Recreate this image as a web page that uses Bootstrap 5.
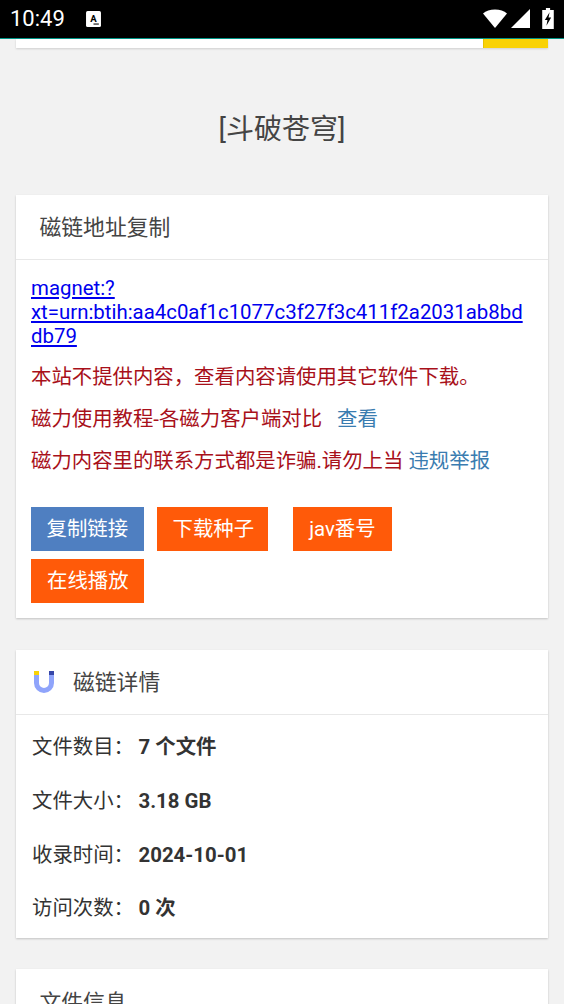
<!DOCTYPE html>
<html lang="zh"><head><meta charset="utf-8">
<link href="https://cdn.jsdelivr.net/npm/bootstrap@5.3.0/dist/css/bootstrap.min.css" rel="stylesheet">
<style>
html,body{height:1004px;overflow:hidden}
body{background:#f2f2f2;font-family:Roboto,"Noto Sans CJK SC",sans-serif;color:#333;font-size:20.4px;line-height:24px}
.statusbar{background:#000;color:#fff;padding:0 10px;box-sizing:content-box;height:37.5px;border-bottom:1.5px solid #009688}
.statusbar .clock{font-size:22px;font-weight:400;width:76px}
.top-strip{height:9px;margin:0 16px;background:#fff;box-shadow:0 1px 2px rgba(0,0,0,.15)}
.top-strip .yellow{width:65px;background:#f9d205;border-left:1px solid #e6c200}
.page-title{height:147px;font-size:28px;padding-top:17px;color:#444}
.panel{background:#fff;margin:0 16px 31px;box-shadow:0 1px 2px rgba(0,0,0,.2)}
.panel-first{margin-bottom:32px}
.panel-head{height:65px;border-bottom:1px solid #e8e8e8;padding-left:23.500px;padding-top:3px;font-size:21.8px;color:#444}
.panel-head.withicon{padding-left:18px;padding-top:0;gap:19px}
.panel-head.withicon span{padding-top:3px}
.body-a{padding:16px 15px 7px 15px}
.maglink{color:#0000ee;text-decoration:underline;overflow-wrap:anywhere;line-height:24px;display:block;margin-bottom:17px}
.warn{color:#a8101a;margin-bottom:18px;line-height:24px}
.warn a{color:#3a7cb0;text-decoration:none}
.warn .gap{margin-left:15px}
.actions{display:flex;flex-wrap:wrap;margin-top:34px}
.act{height:44px;border:0;border-radius:0;color:#fff;font-size:20.4px;background:#ff5a09;padding:0 15.500px;line-height:44px;margin:0 13px 8px 0}
.act.blue{background:#4f7fc1}
.act.wide{margin-right:25px;padding:0 14px 0 16px}
.act.tight{padding:0 16px}
.act.last{padding:0 15px 0 16px}
.rowbreak{flex-basis:100%;height:0}
.facts{padding:6px 16px 3px}
.fact{height:53.7px;display:flex;align-items:center}
.fact span{width:106.500px}
.fact b{font-weight:700}
</style></head><body>
<div class="statusbar d-flex align-items-center">
<span class="clock">10:49</span>
<svg width="15" height="16" viewBox="0 0 14 15"><rect x="0" y="0" width="14" height="15" rx="1.5" fill="#fff"/><text x="7" y="10" font-size="9" font-weight="700" text-anchor="middle" font-family="Roboto" fill="#000">A</text><rect x="7" y="11.5" width="5" height="1.5" fill="#555"/></svg>
<span class="ms-auto d-flex align-items-center gap-1">
<svg width="24" height="20" viewBox="0 0 24 20"><path d="M0 4.500C3 2 7 .5 12 .5s9 1.500 12 4L12 19z" fill="#fff"/></svg>
<svg width="19" height="19" viewBox="0 0 19 19"><path d="M0 19L19 0v19z" fill="#fff"/></svg>
<svg class="ms-2" width="12" height="21" viewBox="0 0 11 20"><path d="M3.500 0h4v2H11v18H0V2h3.500z" fill="#fff"/><path d="M7 4L2.500 11.500H5L4 17l4.500-8H6z" fill="#000"/></svg>
</span></div>
<div class="top-strip d-flex justify-content-end"><div class="yellow"></div></div>
<div class="page-title d-flex align-items-center justify-content-center">[斗破苍穹]</div>
<div class="panel panel-first">
<div class="panel-head d-flex align-items-center">磁链地址复制</div>
<div class="body-a">
<a class="maglink" href="#">magnet:?xt=urn:btih:aa4c0af1c1077c3f27f3c411f2a2031ab8bddb79</a>
<div class="warn">本站不提供内容，查看内容请使用其它软件下载。</div>
<div class="warn">磁力使用教程-各磁力客户端对比<a class="gap" href="#">查看</a></div>
<div class="warn">磁力内容里的联系方式都是诈骗.请勿上当 <a href="#">违规举报</a></div>
<div class="actions">
<button class="act blue">复制链接</button>
<button class="act wide">下载种子</button>
<button class="act tight">jav番号</button>
<div class="rowbreak"></div>
<button class="act last">在线播放</button>
</div></div></div>
<div class="panel">
<div class="panel-head withicon d-flex align-items-center">
<svg width="20" height="22" viewBox="0 0 20 22"><path d="M2.500 4v8a7.500 7.500 0 0 0 15 0V4" fill="none" stroke="#8fa4fb" stroke-width="5"/><rect width="5" height="4" fill="#f9d205"/><rect x="15" width="5" height="4" fill="#3646a8"/></svg>
<span>磁链详情</span></div>
<div class="facts">
<div class="fact"><span>文件数目：</span><b>7 个文件</b></div>
<div class="fact"><span>文件大小：</span><b>3.18 GB</b></div>
<div class="fact"><span>收录时间：</span><b>2024-10-01</b></div>
<div class="fact"><span>访问次数：</span><b>0 次</b></div>
</div></div>
<div class="panel"><div class="panel-head d-flex align-items-center">文件信息</div></div>
<script src="https://cdn.jsdelivr.net/npm/bootstrap@5.3.0/dist/js/bootstrap.bundle.min.js"></script>
</body></html>
